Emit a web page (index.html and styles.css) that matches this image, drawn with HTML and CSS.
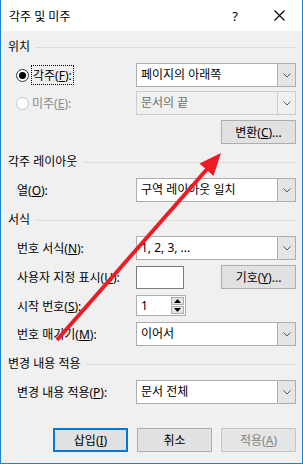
FILE: index.html
```html
<!doctype html>
<html lang="ko">
  <head>
    <meta charset="utf-8">
    <title>각주 및 미주</title>
    <link rel="stylesheet" href="styles.css">
  </head>
  <body>
    <div class="dialog">
      <div class="titlebar">
        <span class="title">각주 및 미주</span>
        <span class="help">?</span>
        <svg class="close" width="11" height="11" viewBox="0 0 11 11">
          <path d="M0.5 0.5 L10.5 10.5 M10.5 0.5 L0.5 10.5" stroke="#000" stroke-width="1.1" fill="none" />
        </svg>
      </div>

      <div class="content">
        <section class="section first">
          <div class="heading">위치</div>
          <div class="row">
            <label class="label radio-label">
              <span class="radio checked"></span>
              <span class="focus">각주(<u>F</u>):</span>
            </label>
            <div class="select">
              <span class="value">페이지의 아래쪽</span>
              <span class="drop"><svg width="8" height="5" viewBox="0 0 8 5"><path d="M0.5 0.5 L4 4 L7.5 0.5" stroke="#555" fill="none" /></svg></span>
            </div>
          </div>
          <div class="row gap4">
            <label class="label radio-label disabled">
              <span class="radio"></span>
              <span>미주(<u>E</u>):</span>
            </label>
            <div class="select disabled">
              <span class="value">문서의 끝</span>
              <span class="drop"><svg width="8" height="5" viewBox="0 0 8 5"><path d="M0.5 0.5 L4 4 L7.5 0.5" stroke="#555" fill="none" /></svg></span>
            </div>
          </div>
          <div class="row gap5 right">
            <button class="btn">변환(<u>C</u>)...</button>
          </div>
        </section>

        <section class="section">
          <div class="heading">각주 레이아웃</div>
          <div class="row">
            <span class="label">열(<u>O</u>):</span>
            <div class="select">
              <span class="value">구역 레이아웃 일치</span>
              <span class="drop"><svg width="8" height="5" viewBox="0 0 8 5"><path d="M0.5 0.5 L4 4 L7.5 0.5" stroke="#555" fill="none" /></svg></span>
            </div>
          </div>
        </section>

        <section class="section">
          <div class="heading">서식</div>
          <div class="row">
            <span class="label">번호 서식(<u>N</u>):</span>
            <div class="select">
              <span class="value">1, 2, 3, ...</span>
              <span class="drop"><svg width="8" height="5" viewBox="0 0 8 5"><path d="M0.5 0.5 L4 4 L7.5 0.5" stroke="#555" fill="none" /></svg></span>
            </div>
          </div>
          <div class="row gap5">
            <span class="label">사용자 지정 표시(<u>U</u>):</span>
            <div class="field-pair">
              <span class="textbox"></span>
              <button class="btn">기호(<u>Y</u>)...</button>
            </div>
          </div>
          <div class="row gap6 short">
            <span class="label">시작 번호(<u>S</u>):</span>
            <div class="field-pair">
              <div class="spinner">
                <span class="value">1</span>
                <span class="spin">
                  <span class="spin-btn"><svg width="7" height="4" viewBox="0 0 7 4"><path d="M0 4 L3.5 0 L7 4 Z" fill="#000" /></svg></span>
                  <span class="spin-btn"><svg width="7" height="4" viewBox="0 0 7 4"><path d="M0 0 L3.5 4 L7 0 Z" fill="#000" /></svg></span>
                </span>
              </div>
            </div>
          </div>
          <div class="row gap6">
            <span class="label">번호 매기기(<u>M</u>):</span>
            <div class="select">
              <span class="value">이어서</span>
              <span class="drop"><svg width="8" height="5" viewBox="0 0 8 5"><path d="M0.5 0.5 L4 4 L7.5 0.5" stroke="#555" fill="none" /></svg></span>
            </div>
          </div>
        </section>

        <section class="section">
          <div class="heading">변경 내용 적용</div>
          <div class="row">
            <span class="label">변경 내용 적용(<u>P</u>):</span>
            <div class="select">
              <span class="value">문서 전체</span>
              <span class="drop"><svg width="8" height="5" viewBox="0 0 8 5"><path d="M0.5 0.5 L4 4 L7.5 0.5" stroke="#555" fill="none" /></svg></span>
            </div>
          </div>
        </section>

        <div class="actions">
          <button class="btn default">삽입(<u>I</u>)</button>
          <button class="btn">취소</button>
          <button class="btn" disabled>적용(<u>A</u>)</button>
        </div>
      </div>

      <!-- annotation arrow drawn over the dialog -->
      <svg class="arrow" width="303" height="464" viewBox="0 0 303 464">
        <line x1="57" y1="340" x2="208" y2="168" stroke="#ed1c24" stroke-width="4" />
        <polygon points="221,153 213.5,176 199.5,163.5" fill="#ed1c24" />
      </svg>
    </div>
  </body>
</html>
```

FILE: styles.css
```css
* {
  box-sizing: border-box;
}

body {
  margin: 0;
  font-family: "Noto Sans", "Noto Sans CJK KR", sans-serif;
  font-size: 12px;
  color: #000;
}

.dialog {
  position: relative;
  width: 303px;
  height: 464px;
  border: 1px solid #1883d7;
  border-top: none;
  background: #f0f0f0;
  display: flex;
  flex-direction: column;
}

.titlebar {
  height: 31px;
  background: #fff;
  display: flex;
  align-items: center;
  padding-left: 8px;
}

.title {
  flex: 1;
  font-size: 12px;
}

.help {
  font-size: 13px;
  margin-right: 36px;
}

.close {
  margin-right: 17px;
}

.content {
  padding: 0 6px 0 7px;
  flex: 1;
  display: flex;
  flex-direction: column;
}

.section {
  margin-top: 10px;
}

.section.first {
  margin-top: 8px;
}

.heading {
  display: flex;
  align-items: center;
  height: 16px;
  line-height: 16px;
  gap: 6px;
  margin-bottom: 8px;
}

.heading::after {
  content: "";
  flex: 1;
  border-top: 1px solid #dcdcdc;
}

.row {
  display: flex;
  align-items: center;
  height: 24px;
}

.row.gap4 {
  margin-top: 4px;
}

.row.gap5 {
  margin-top: 5px;
}

.row.gap6 {
  margin-top: 6px;
}

.row.short {
  height: 21px;
}

.row.right {
  justify-content: flex-end;
}

.label {
  flex: 1;
  padding-left: 9px;
  white-space: nowrap;
}

.radio-label {
  display: flex;
  align-items: center;
  padding-left: 8px;
}

.radio-label.disabled {
  color: #8a8a8a;
}

.radio {
  width: 13px;
  height: 13px;
  border: 1px solid #333;
  border-radius: 50%;
  background: #fff;
  margin-right: 3px;
  display: flex;
  align-items: center;
  justify-content: center;
}

.radio.checked::after {
  content: "";
  width: 7px;
  height: 7px;
  border-radius: 50%;
  background: #000;
}

.radio-label.disabled .radio {
  border-color: #c6c6c6;
}

.focus {
  outline: 1px dotted #000;
  padding: 0 1px;
}

.select {
  width: 160px;
  height: 24px;
  border: 1px solid #adadad;
  background: #fff;
  display: flex;
}

.select .value {
  flex: 1;
  padding-left: 4px;
  line-height: 22px;
  white-space: nowrap;
}

.select .drop {
  width: 18px;
  background: #e5e5e5;
  border-left: 1px solid #adadad;
  display: flex;
  align-items: center;
  justify-content: center;
}

.select.disabled {
  background: #f0f0f0;
  border-color: #cccccc;
  color: #6d6d6d;
}

.select.disabled .drop {
  background: #f0f0f0;
  border-left-color: #cccccc;
}

.btn {
  width: 75px;
  height: 24px;
  padding: 0;
  font: inherit;
  color: #000;
  background: #e1e1e1;
  border: 1px solid #adadad;
}

.btn.default {
  border: 2px solid #0078d7;
}

.btn:disabled {
  color: #838383;
  background: #e5e5e5;
  border-color: #c4c4c4;
}

.field-pair {
  width: 160px;
  display: flex;
  align-items: center;
  justify-content: space-between;
}

.textbox {
  width: 48px;
  height: 23px;
  background: #fff;
  border: 1px solid #7a7a7a;
}

.spinner {
  width: 50px;
  height: 21px;
  background: #fff;
  border: 1px solid #adadad;
  display: flex;
}

.spinner .value {
  flex: 1;
  padding-left: 4px;
  line-height: 19px;
}

.spin {
  width: 14px;
  display: flex;
  flex-direction: column;
  gap: 1px;
  padding: 1px 1px 1px 0;
}

.spin-btn {
  flex: 1;
  background: #e5e5e5;
  border: 1px solid #adadad;
  display: flex;
  align-items: center;
  justify-content: center;
}

.actions {
  margin-top: 24px;
  display: flex;
  justify-content: flex-end;
  gap: 9px;
}

.arrow {
  position: absolute;
  left: -1px;
  top: 0;
  pointer-events: none;
}
```
